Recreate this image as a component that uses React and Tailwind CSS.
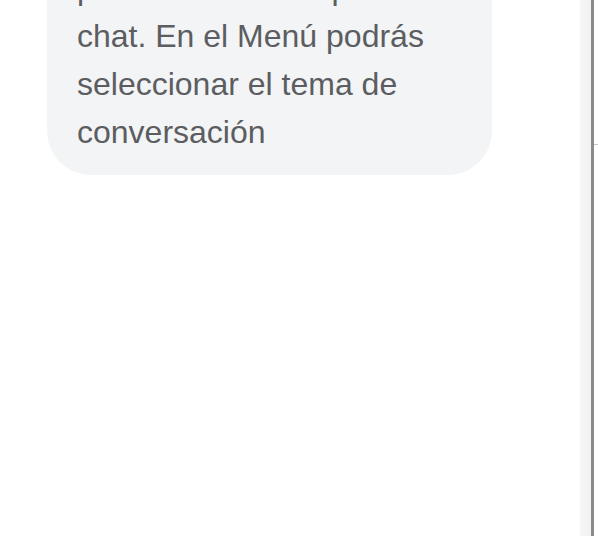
export default function App() {
  const font = { fontFamily: '"Liberation Sans", Arial, sans-serif' };
  return (
    <div className="flex h-[536px] w-[598px] overflow-hidden bg-white">
      <div className="flex-1 overflow-hidden">
        <div
          className="ml-[47px] -mt-[54px] w-[445px] rounded-[44px] bg-[#f3f4f6] pl-[30px] pr-[20px] pt-[18px] pb-[19px] text-[32px] leading-[48px] text-[#5c5d61]"
          style={font}
        >
          <div className="whitespace-nowrap">presiona el botón para iniciar el</div>
          <div className="whitespace-nowrap">chat. En el Menú podrás</div>
          <div className="whitespace-nowrap">seleccionar el tema de</div>
          <div className="whitespace-nowrap">conversación</div>
        </div>
      </div>
      <div className="w-[11px] bg-gradient-to-r from-[#f7f7f7] to-[#f1f1f1]" />
      <div className="w-[3px] bg-[#8a8a8a]" />
      <div className="flex w-[4px] flex-col bg-white">
        <div className="h-[144px]" />
        <div className="h-[1px] bg-[#c8c8c8]" />
      </div>
    </div>
  );
}
